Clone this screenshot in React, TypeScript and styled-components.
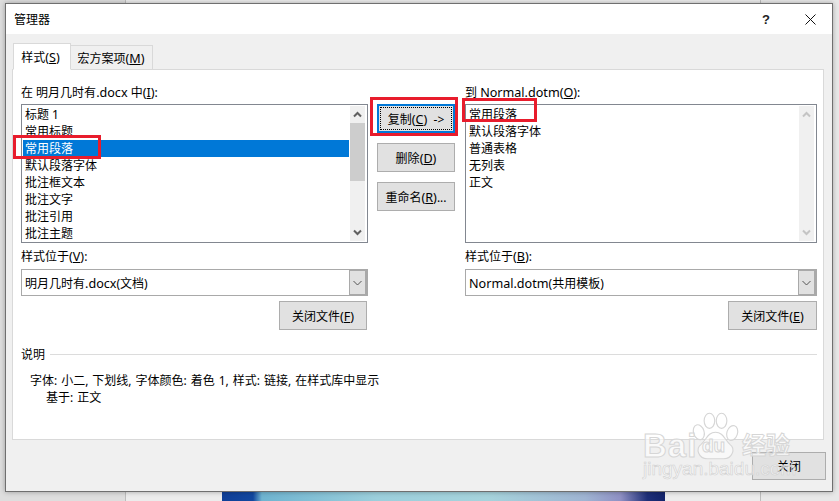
import React from "react";
import styled, { createGlobalStyle } from "styled-components";

const Global = createGlobalStyle`
  html, body { margin: 0; padding: 0; width: 839px; height: 501px; overflow: hidden; background: #e7e7e7; }
  * { box-sizing: border-box; }
  body { font-family: "Noto Sans", "Noto Sans CJK SC", sans-serif; font-size: 12px; color: #000; }
  u { text-underline-offset: 1px; }
`;

const Page = styled.div`
  position: relative;
  width: 839px;
  height: 501px;
  padding: 3px 6px 9px 5px;
  overflow: hidden;
`;

const Backdrop = styled.div`
  position: absolute;
  inset: 0;
  display: grid;
  grid-template-columns: 126px 635px 78px;
  background: #e8e8e8;
`;

const BackColumn = styled.div`
  border-right: 1px solid #bdbdbd;
  background: ${(p: { $shade: string }) => p.$shade};
`;

const Photo = styled.div`
  position: absolute;
  left: 222px;
  bottom: 0;
  width: 443px;
  height: 12px;
  background: linear-gradient(90deg, #0f3f98 0, #12479f 7%, #6fb4d0 9%, #9ccfdc 35%, #a6d3dc 60%, #9fb4d2 82%, #8f90c4 90%, #1e2f78 96%, #12236a 100%);
`;

const Dialog = styled.div`
  position: relative;
  width: 828px;
  height: 489px;
  display: flex;
  flex-direction: column;
  background: #f0f0f0;
  border: 1px solid #6f6f6f;
  box-shadow: 0 0 5px rgba(0, 0, 0, 0.3);
`;

const TitleBar = styled.div`
  height: 30px;
  flex: none;
  display: flex;
  align-items: center;
  background: #fff;
  padding-left: 8px;
  font-size: 12px;
`;

const TitleText = styled.span`
  flex: 1;
`;

const HelpMark = styled.span`
  width: 10px;
  margin-right: 34px;
  font-size: 13px;
  text-align: center;
  font-family: "Liberation Sans", sans-serif;
  font-weight: 700;
  color: #222;
`;

const CloseGlyph = styled.svg`
  width: 11px;
  height: 11px;
  margin-right: 16px;
`;

const Body = styled.div`
  flex: 1;
  display: flex;
  flex-direction: column;
  padding: 9px 8px 0 6px;
  background: #f0f0f0;
`;

const TabStrip = styled.div`
  display: flex;
  align-items: flex-end;
  height: 27px;
  flex: none;
  position: relative;
  z-index: 1;
  margin-bottom: -1px;
`;

const Tab = styled.div<{ $active?: boolean }>`
  height: ${(p) => (p.$active ? "27px" : "25px")};
  width: ${(p) => (p.$active ? "58px" : "82px")};
  margin-left: ${(p) => (p.$active ? "0.5px" : "0")};
  padding-right: ${(p) => (p.$active ? "2px" : "0")};
  display: flex;
  align-items: center;
  justify-content: center;
  background: ${(p) => (p.$active ? "#fff" : "#f0f0f0")};
  border: 1px solid #d9d9d9;
  border-bottom: ${(p) => (p.$active ? "1px solid #fff" : "1px solid #d9d9d9")};
  border-left-width: ${(p) => (p.$active ? "1px" : "0")};
`;

const Panel = styled.div`
  height: 371px;
  flex: none;
  background: #fff;
  border: 1px solid #d9d9d9;
  padding: 15px 6px 0 8px;
  display: flex;
  flex-direction: column;
`;

const Columns = styled.div`
  display: grid;
  grid-template-columns: 347px 97px 352px;
`;

const Column = styled.div`
  display: flex;
  flex-direction: column;
`;

const Latin = styled.span`
  font-size: 12.6px;
`;

const FieldLabel = styled.div<{ $top?: number }>`
  height: 15px;
  line-height: 15px;
  margin-top: ${(p) => p.$top ?? 0}px;
  margin-bottom: ${(p) => (p.$top ? 5 : 4)}px;
  white-space: pre;
`;

const ListBox = styled.div`
  height: 139px;
  display: flex;
  border: 1px solid #828790;
  padding: 1px 2px 1px 1px;
  background: #fff;
`;

const Rows = styled.div`
  flex: 1;
  min-width: 0;
`;

const Row = styled.div<{ $selected?: boolean }>`
  height: 17px;
  line-height: 17px;
  padding-left: 2px;
  white-space: pre;
  background: ${(p) => (p.$selected ? "#0078d7" : "transparent")};
  color: ${(p) => (p.$selected ? "#fff" : "#000")};
`;

const ScrollBar = styled.div`
  width: 15px;
  flex: none;
  margin-left: 1px;
  display: flex;
  flex-direction: column;
  background: #f0f0f0;
`;

const ScrollArrow = styled.div`
  height: 17px;
  flex: none;
  display: flex;
  align-items: center;
  justify-content: center;
`;

const ScrollTrack = styled.div`
  flex: 1;
`;

const ScrollThumb = styled.div`
  height: 58px;
  background: #cdcdcd;
`;

const Combo = styled.div`
  height: 27px;
  display: flex;
  align-items: center;
  border: 1px solid #a9a9a9;
  background: #fff;
  padding-left: 3px;
`;

const ComboValue = styled.span`
  flex: 1;
  white-space: pre;
`;

const ComboButton = styled.div`
  width: 18px;
  height: 25px;
  flex: none;
  display: flex;
  align-items: center;
  justify-content: center;
  background: #e1e1e1;
  border: 1px solid #a9a9a9;
  border-left-width: 1px;
  border-right-width: 2px;
  border-top-width: 1px;
  border-bottom-width: 1px;
`;

const Button = styled.div<{ $w: number; $h?: number; $primary?: boolean }>`
  width: ${(p) => p.$w}px;
  height: ${(p) => p.$h ?? 29}px;
  flex: none;
  display: flex;
  align-items: center;
  justify-content: center;
  white-space: pre;
  background: #e1e1e1;
  border: ${(p) => (p.$primary ? "2px solid #0078d7" : "1px solid #adadad")};
  outline: ${(p) => (p.$primary ? "1px dotted #000" : "none")};
  outline-offset: ${(p) => (p.$primary ? "-4px" : "0")};
`;

const ButtonRight = styled.div<{ $pad: number }>`
  display: flex;
  justify-content: flex-end;
  margin-top: 5px;
  padding-right: ${(p) => p.$pad}px;
`;

const Actions = styled.div`
  display: flex;
  flex-direction: column;
  gap: 10px;
  padding: 19px 0 0 9px;
`;

const DescHead = styled.div`
  display: flex;
  align-items: center;
  gap: 5px;
  height: 16px;
  margin-top: 16px;
`;

const DescRule = styled.div`
  flex: 1;
  height: 1px;
  background: #dcdcdc;
`;

const DescText = styled.div`
  padding: 10px 0 0 9px;
  line-height: 17px;
  white-space: pre;
  word-spacing: 0.85px;
`;

const DescIndent = styled.div`
  padding-left: 16px;
`;

const Footer = styled.div`
  flex: 1;
  display: flex;
  justify-content: flex-end;
  align-items: flex-start;
  padding: 12px 0 0 0;
  margin-right: -2px;
`;

const Mark = styled.div<{ $x: number; $y: number; $w: number; $h: number }>`
  position: absolute;
  left: ${(p) => p.$x}px;
  top: ${(p) => p.$y}px;
  width: ${(p) => p.$w}px;
  height: ${(p) => p.$h}px;
  border: 3px solid #e81c2c;
  pointer-events: none;
`;

const Watermark = styled.div`
  position: absolute;
  left: 642px;
  top: 410px;
  width: 160px;
  height: 72px;
  pointer-events: none;
`;

const PawIcon = styled.svg`
  position: absolute;
  left: 50px;
  top: 2px;
  width: 47px;
  height: 48px;
`;

const WordBai = styled.span`
  position: absolute;
  left: 1px;
  top: 17px;
  font: 700 33px/38px "Liberation Sans", sans-serif;
  letter-spacing: 1px;
  color: rgba(255, 255, 255, 0.65);
  -webkit-text-stroke: 1px #d6d6d6;
`;

const WordDu = styled.span`
  position: absolute;
  left: 60px;
  top: 24px;
  font: 700 19px/24px "Liberation Sans", sans-serif;
  color: rgba(255, 255, 255, 0.65);
  -webkit-text-stroke: 1px #d6d6d6;
`;

const WordJy = styled.span`
  position: absolute;
  left: 100px;
  top: 18px;
  font: 700 24px/32px "Noto Sans CJK SC", sans-serif;
  color: rgba(255, 255, 255, 0.65);
  -webkit-text-stroke: 1px #d6d6d6;
`;

const WordUrl = styled.span`
  position: absolute;
  left: 1px;
  top: 48px;
  font: 400 19px/22px "Liberation Sans", sans-serif;
  color: rgba(255, 255, 255, 0.6);
  -webkit-text-stroke: 0.6px #d0d0d0;
  white-space: pre;
`;

const Chevron = ({ dir, color }: { dir: "up" | "down"; color: string }) => (
  <svg width="9" height="7" viewBox="0 0 9 7">
    <path
      d={dir === "up" ? "M1 5.5 L4.5 2 L8 5.5" : "M1 1.5 L4.5 5 L8 1.5"}
      fill="none"
      stroke={color}
      strokeWidth="2"
    />
  </svg>
);

const ThinChevron = () => (
  <svg width="9" height="6" viewBox="0 0 9 6">
    <path d="M0.5 1 L4.5 5 L8.5 1" fill="none" stroke="#555" strokeWidth="1" />
  </svg>
);

const Scroller = ({ enabled }: { enabled: boolean }) => (
  <ScrollBar>
    <ScrollArrow>
      <Chevron dir="up" color={enabled ? "#606060" : "#c4c4c4"} />
    </ScrollArrow>
    <ScrollTrack>{enabled && <ScrollThumb />}</ScrollTrack>
    <ScrollArrow>
      <Chevron dir="down" color={enabled ? "#606060" : "#c4c4c4"} />
    </ScrollArrow>
  </ScrollBar>
);

const leftItems = ["标题 1", "常用标题", "常用段落", "默认段落字体", "批注框文本", "批注文字", "批注引用", "批注主题"];
const rightItems = ["常用段落", "默认段落字体", "普通表格", "无列表", "正文"];

const Key = ({ k }: { k: string }) => (
  <Latin>
    (<u>{k}</u>)
  </Latin>
);

export default function App() {
  return (
    <Page>
      <Global />
      <Backdrop>
        <BackColumn $shade="#dedede" />
        <BackColumn $shade="#ececec" />
        <div />
      </Backdrop>
      <Photo />
      <Dialog>
        <TitleBar>
          <TitleText>管理器</TitleText>
          <HelpMark>?</HelpMark>
          <CloseGlyph viewBox="0 0 11 11">
            <path d="M0.5 0.5 L10.5 10.5 M10.5 0.5 L0.5 10.5" stroke="#111" strokeWidth="1" fill="none" />
          </CloseGlyph>
        </TitleBar>
        <Body>
          <TabStrip>
            <Tab $active>
              <span>
                样式<Key k="S" />
              </span>
            </Tab>
            <Tab>
              <span>
                宏方案项<Key k="M" />
              </span>
            </Tab>
          </TabStrip>
          <Panel>
            <Columns>
              <Column>
                <FieldLabel>
                  在 明月几时有<Latin>.docx</Latin> 中<Key k="I" />:
                </FieldLabel>
                <ListBox>
                  <Rows>
                    {leftItems.map((t, i) => (
                      <Row key={t} $selected={i === 2}>
                        {t}
                      </Row>
                    ))}
                  </Rows>
                  <Scroller enabled />
                </ListBox>
                <FieldLabel $top={6}>
                  样式位于<Key k="V" />:
                </FieldLabel>
                <Combo>
                  <ComboValue>
                    明月几时有<Latin>.docx</Latin>(文档)
                  </ComboValue>
                  <ComboButton>
                    <ThinChevron />
                  </ComboButton>
                </Combo>
                <ButtonRight $pad={1}>
                  <Button $w={88}>
                    <span>
                      关闭文件<Key k="F" />
                    </span>
                  </Button>
                </ButtonRight>
              </Column>
              <Actions>
                <Button $w={78} $primary>
                  <span>
                    复制<Key k="C" />
                    {"  "}-&gt;
                  </span>
                </Button>
                <Button $w={78}>
                  <span>
                    删除<Key k="D" />
                  </span>
                </Button>
                <Button $w={78}>
                  <span>
                    重命名<Key k="R" />
                    ...
                  </span>
                </Button>
              </Actions>
              <Column>
                <FieldLabel>
                  到 <Latin>Normal.dotm</Latin>
                  <Key k="O" />:
                </FieldLabel>
                <ListBox>
                  <Rows>
                    {rightItems.map((t) => (
                      <Row key={t}>{t}</Row>
                    ))}
                  </Rows>
                  <Scroller enabled={false} />
                </ListBox>
                <FieldLabel $top={6}>
                  样式位于<Key k="B" />:
                </FieldLabel>
                <Combo>
                  <ComboValue>
                    <Latin>Normal.dotm</Latin>(共用模板)
                  </ComboValue>
                  <ComboButton>
                    <ThinChevron />
                  </ComboButton>
                </Combo>
                <ButtonRight $pad={0}>
                  <Button $w={89}>
                    <span>
                      关闭文件<Key k="E" />
                    </span>
                  </Button>
                </ButtonRight>
              </Column>
            </Columns>
            <DescHead>
              <span>说明</span>
              <DescRule />
            </DescHead>
            <DescText>
              <div>字体: 小二, 下划线, 字体颜色: 着色 1, 样式: 链接, 在样式库中显示</div>
              <DescIndent>基于: 正文</DescIndent>
            </DescText>
          </Panel>
          <Footer>
            <Button $w={74} $h={28}>
              关闭
            </Button>
          </Footer>
        </Body>
      </Dialog>
      <Mark $x={13} $y={135} $w={88} $h={24} />
      <Mark $x={370} $y={97} $w={88} $h={39} />
      <Mark $x={462} $y={98} $w={75} $h={24} />
      <Watermark>
        <PawIcon viewBox="0 0 62 62">
          <g fill="rgba(255,255,255,0.55)" stroke="#d6d6d6" strokeWidth="1.5">
            <ellipse cx="9" cy="26" rx="7" ry="10" transform="rotate(-18 9 26)" />
            <ellipse cx="23" cy="11" rx="7" ry="10" />
            <ellipse cx="39" cy="11" rx="7" ry="10" />
            <ellipse cx="53" cy="27" rx="7" ry="10" transform="rotate(18 53 27)" />
            <path d="M31 26 C41 26 43 36 50 42 C58 48 53 61 42 61 L20 61 C9 61 4 48 12 42 C19 36 21 26 31 26 Z" />
          </g>
        </PawIcon>
        <WordBai>Bai</WordBai>
        <WordDu>du</WordDu>
        <WordJy>经验</WordJy>
        <WordUrl>jingyan.baidu.com</WordUrl>
      </Watermark>
    </Page>
  );
}
